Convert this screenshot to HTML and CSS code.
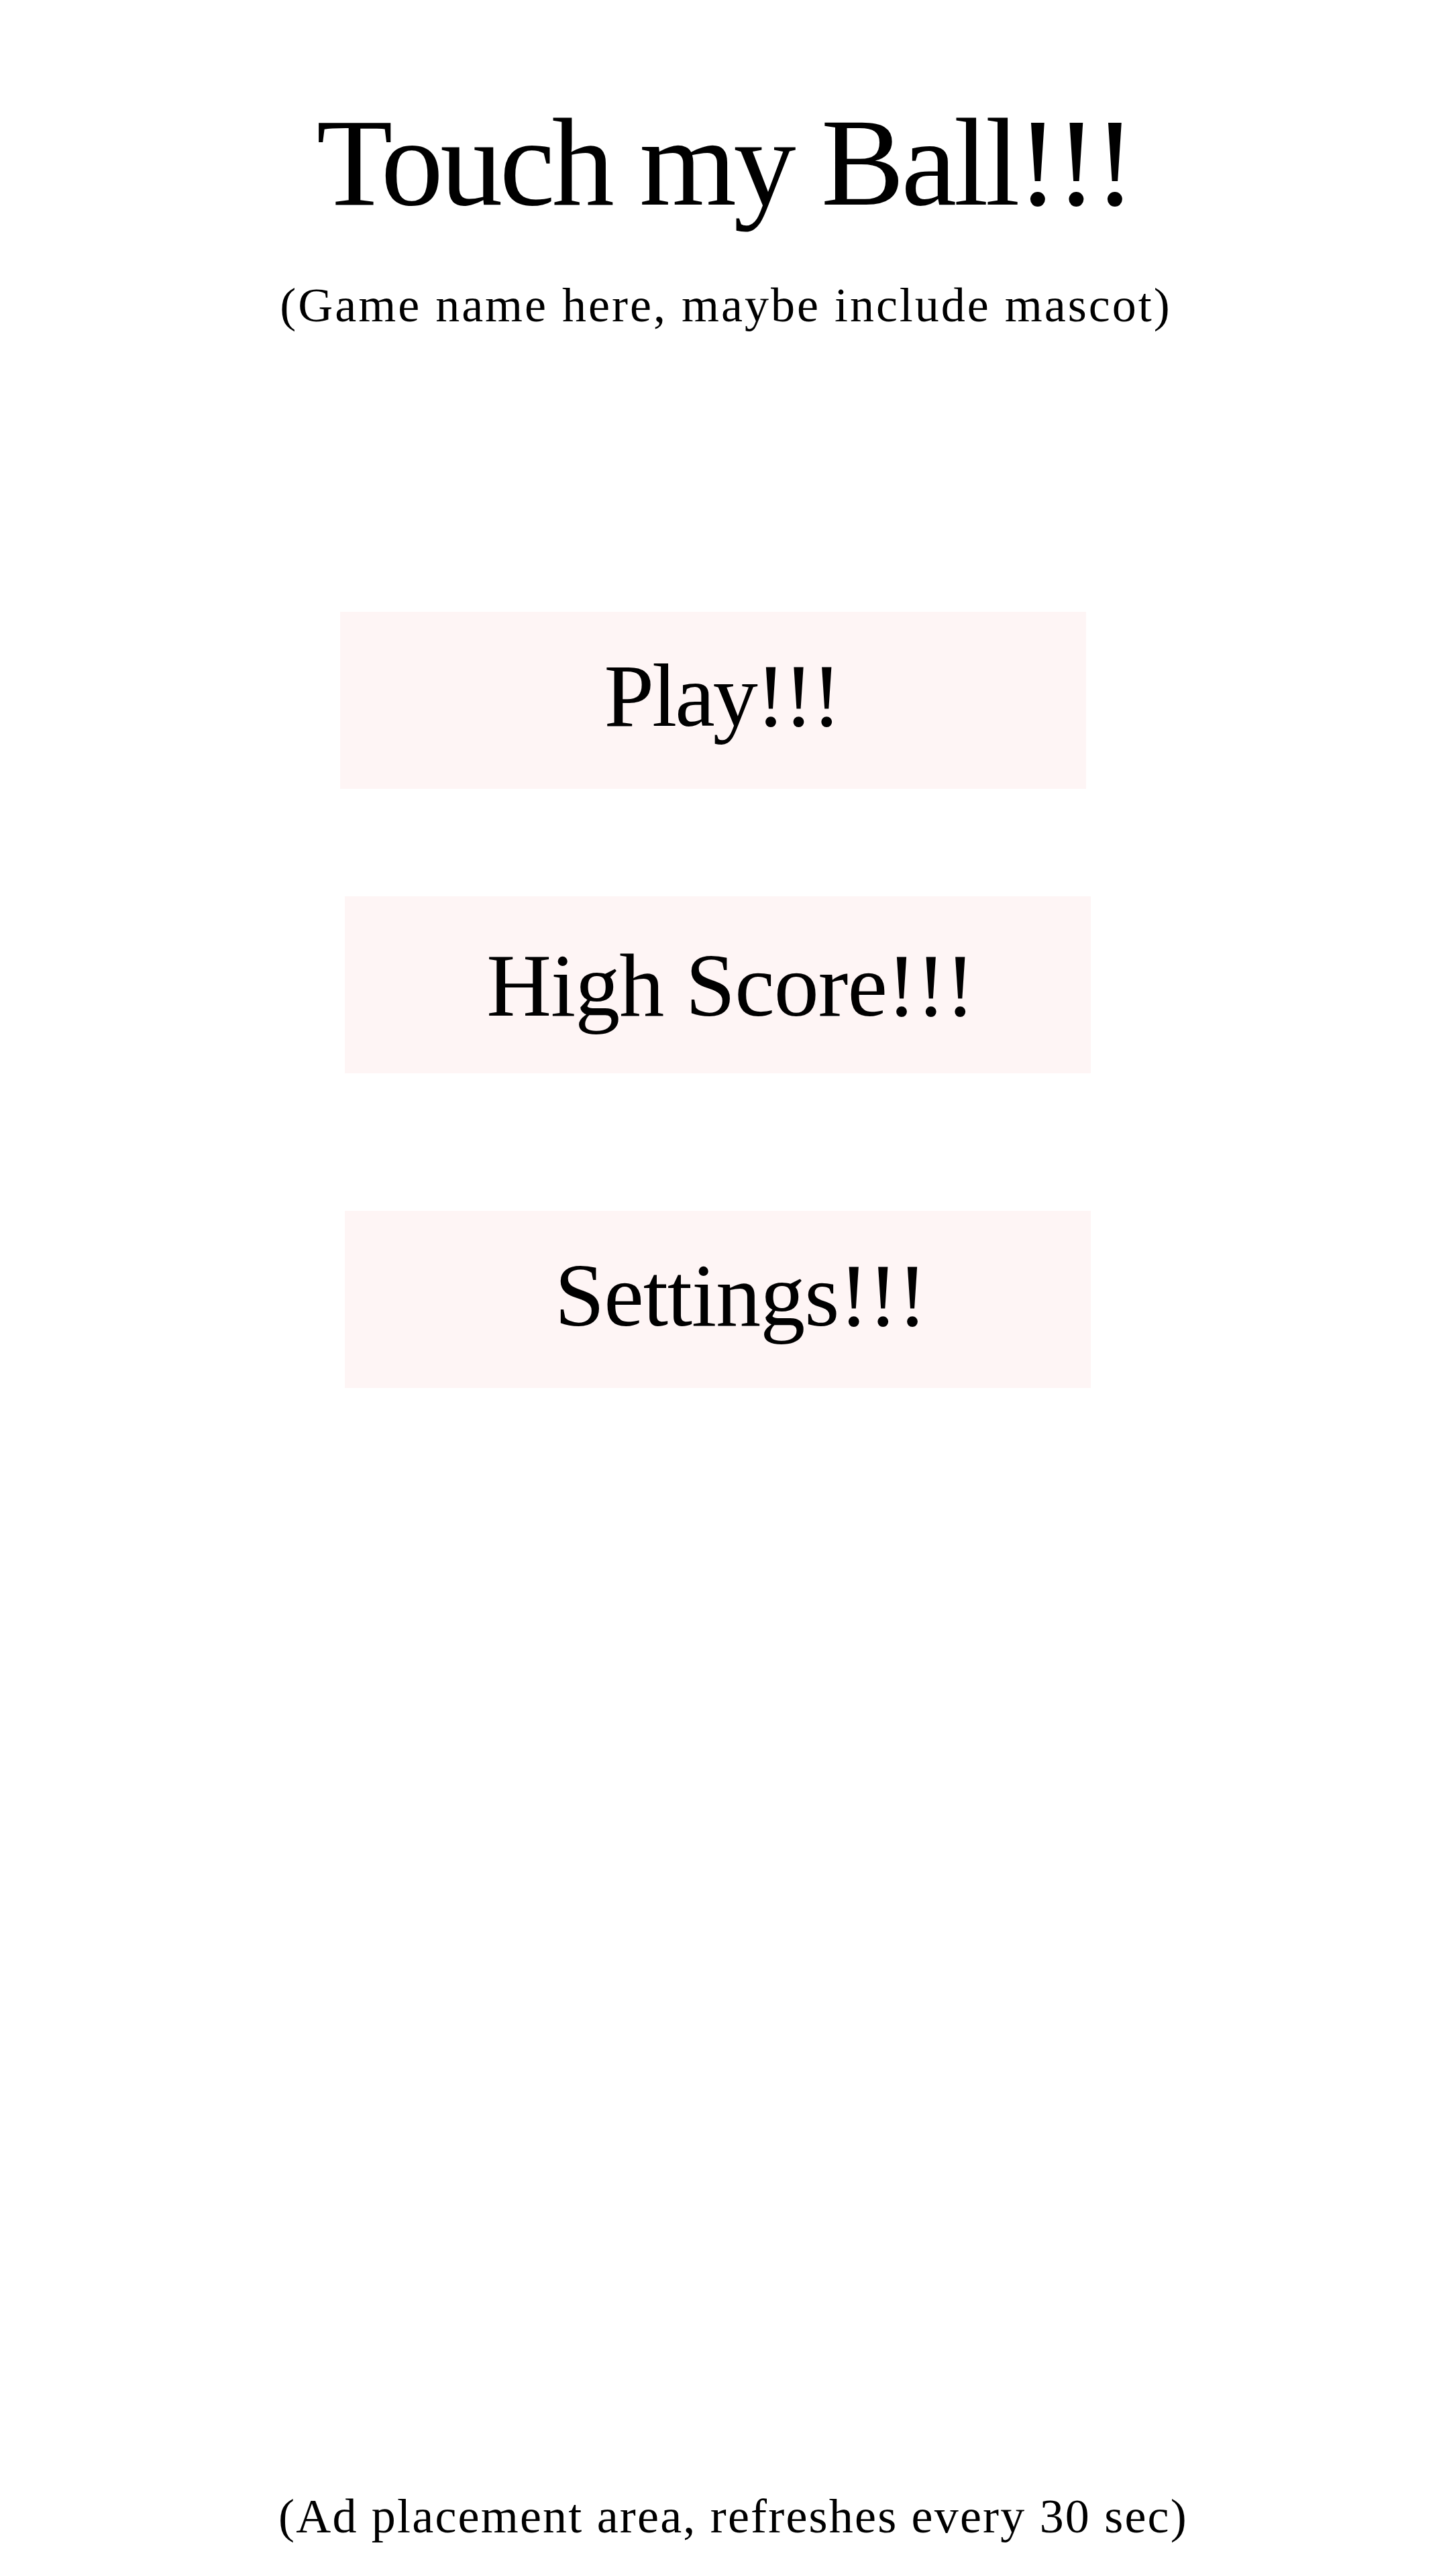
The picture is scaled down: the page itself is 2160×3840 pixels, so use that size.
FILE: index.html
```html
<!DOCTYPE html>
<html lang="en">
<head>
<meta charset="utf-8">
<title>Touch my Ball!!!</title>
<link rel="stylesheet" href="styles.css">
</head>
<body>
<main class="screen">
  <header class="header">
    <h1 class="title">Touch my Ball!!!</h1>
    <p class="subtitle">(Game name here, maybe include mascot)</p>
  </header>
  <nav class="menu">
    <button class="menu-btn menu-btn--play">Play!!!</button>
    <button class="menu-btn menu-btn--score">High Score!!!</button>
    <button class="menu-btn menu-btn--settings">Settings!!!</button>
  </nav>
  <footer class="ad">(Ad placement area, refreshes every 30 sec)</footer>
</main>
</body>
</html>
```
FILE: styles.css
```css
html, body {
  margin: 0;
  padding: 0;
  background: #ffffff;
}
body {
  font-family: "Liberation Serif", "Times New Roman", serif;
  color: #000000;
}
.screen {
  width: 2160px;
  min-height: 3840px;
  display: flex;
  flex-direction: column;
  box-sizing: border-box;
  padding-top: 149px;
  padding-bottom: 53px;
}
.header {
  display: flex;
  flex-direction: column;
  align-items: center;
}
.title {
  margin: 0;
  font-size: 186px;
  font-weight: 400;
  line-height: 1;
  letter-spacing: -4.5px;
}
.subtitle {
  margin: 84px 0 0;
  font-size: 72px;
  line-height: 1;
  letter-spacing: 3px;
  padding-left: 4px;
}
.menu {
  display: flex;
  flex-direction: column;
  align-items: flex-start;
  margin-top: 421px;
}
.menu-btn {
  width: 1112px;
  height: 264px;
  box-sizing: border-box;
  border: none;
  background: #fef5f5;
  font-family: inherit;
  font-size: 134px;
  line-height: 1;
  color: #000000;
  display: flex;
  justify-content: center;
  align-items: flex-start;
  padding: 58px 0 0;
  margin-left: 514px;
  letter-spacing: -1px;
}
.menu-btn--play {
  margin-left: 507px;
  padding-left: 26px;
  letter-spacing: -3px;
}
.menu-btn--score {
  margin-top: 160px;
  padding-top: 66px;
  padding-left: 38px;
}
.menu-btn--settings {
  margin-top: 205px;
  padding-top: 59px;
  padding-left: 68px;
}
.ad {
  margin-top: auto;
  text-align: center;
  font-size: 72px;
  line-height: 1;
  letter-spacing: 2.2px;
  padding-left: 26px;
}
```
